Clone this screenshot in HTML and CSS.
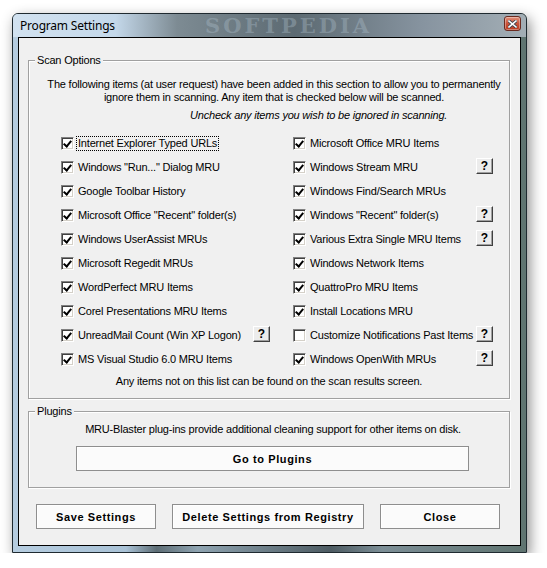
FILE: index.html
```html
<!DOCTYPE html>
<html lang="en">
<head>
  <meta charset="UTF-8" />
  <title>Program Settings</title>
  <link rel="stylesheet" href="styles.css">
</head>
<body>

  <!-- Dialog window -->
  <div class="window">
    <div class="titlebar">
      <span class="title">Program Settings</span>
      <span class="watermark">SOFTPEDIA</span>
      <button class="close-btn" title="Close">
        <svg width="9" height="8" viewBox="0 0 9 8">
          <path d="M1 1 L8 7 M8 1 L1 7" stroke="#3a4250" stroke-width="3.2" stroke-linecap="square"/>
          <path d="M1 1 L8 7 M8 1 L1 7" stroke="#fff" stroke-width="1.6" stroke-linecap="square"/>
        </svg>
      </button>
    </div>

    <div class="client">

      <!-- Scan options -->
      <fieldset class="group scan">
        <legend>Scan Options</legend>
        <p class="intro">The following items (at user request) have been added in this section to allow you to permanently<br>ignore them in scanning. Any item that is checked below will be scanned.</p>
        <p class="hint">Uncheck any items you wish to be ignored in scanning.</p>

        <div class="options">
          <label class="opt"><span class="cb checked"></span><span class="focus">Internet Explorer Typed URLs</span></label>
          <label class="opt"><span class="cb checked"></span><span>Microsoft Office MRU Items</span></label>

          <label class="opt"><span class="cb checked"></span><span>Windows "Run..." Dialog MRU</span></label>
          <label class="opt"><span class="cb checked"></span><span>Windows Stream MRU</span><button class="help">?</button></label>

          <label class="opt"><span class="cb checked"></span><span>Google Toolbar History</span></label>
          <label class="opt"><span class="cb checked"></span><span>Windows Find/Search MRUs</span></label>

          <label class="opt"><span class="cb checked"></span><span>Microsoft Office "Recent" folder(s)</span></label>
          <label class="opt"><span class="cb checked"></span><span>Windows "Recent" folder(s)</span><button class="help">?</button></label>

          <label class="opt"><span class="cb checked"></span><span>Windows UserAssist MRUs</span></label>
          <label class="opt"><span class="cb checked"></span><span>Various Extra Single MRU Items</span><button class="help">?</button></label>

          <label class="opt"><span class="cb checked"></span><span>Microsoft Regedit MRUs</span></label>
          <label class="opt"><span class="cb checked"></span><span>Windows Network Items</span></label>

          <label class="opt"><span class="cb checked"></span><span>WordPerfect MRU Items</span></label>
          <label class="opt"><span class="cb checked"></span><span>QuattroPro MRU Items</span></label>

          <label class="opt"><span class="cb checked"></span><span>Corel Presentations MRU Items</span></label>
          <label class="opt"><span class="cb checked"></span><span>Install Locations MRU</span></label>

          <label class="opt"><span class="cb checked"></span><span>UnreadMail Count (Win XP Logon)</span><button class="help">?</button></label>
          <label class="opt"><span class="cb"></span><span>Customize Notifications Past Items</span><button class="help">?</button></label>

          <label class="opt"><span class="cb checked"></span><span>MS Visual Studio 6.0 MRU Items</span></label>
          <label class="opt"><span class="cb checked"></span><span>Windows OpenWith MRUs</span><button class="help">?</button></label>
        </div>

        <p class="note">Any items not on this list can be found on the scan results screen.</p>
      </fieldset>

      <!-- Plugins -->
      <fieldset class="group plugins">
        <legend>Plugins</legend>
        <p class="plug-text">MRU-Blaster plug-ins provide additional cleaning support for other items on disk.</p>
        <button class="btn plug-btn">Go to Plugins</button>
      </fieldset>

      <div class="actions">
        <button class="btn save-btn">Save Settings</button>
        <button class="btn delete-btn">Delete Settings from Registry</button>
        <button class="btn close-action">Close</button>
      </div>

    </div>
  </div>

</body>
</html>
```

FILE: styles.css
```css
* { box-sizing: border-box; }

body {
  margin: 0;
  background: #fff;
  font: 11px/13px "Liberation Sans", Arial, sans-serif;
  letter-spacing: -0.2px;
  color: #000;
}

p { margin: 0; }

/* window frame */
.window {
  margin: 13px 0 0 12px;
  width: 515px;
  height: 540px;
  border: 1px solid #1f2a30;
  border-radius: 6px 6px 0 0;
  padding: 0 5px 6px 5px;
  display: flex;
  flex-direction: column;
  background: linear-gradient(90deg, #b6cde0 0%, #a9c2d6 22%, #5d6d75 28%, #8ea3b0 36%, #4d5b62 62%, #7c8e96 72%, #5f7470 100%);
  box-shadow: 3px 5px 14px rgba(0,0,0,0.45);
}

.titlebar {
  height: 23px;
  display: flex;
  align-items: center;
  position: relative;
  background: linear-gradient(90deg, #d2e2f0 0%, #c4d8ea 20%, #7d8b93 32%, #5c6a72 55%, #8794a0 80%, #a3aeb5 100%);
  margin: 0 -5px;
  padding: 0 5px;
  border-radius: 5px 5px 0 0;
}

.title {
  margin-left: 2px;
  font: 12px "Noto Sans", "DejaVu Sans", sans-serif;
  letter-spacing: -0.2px;
  color: #000;
  position: relative;
  z-index: 1;
}

.watermark {
  position: absolute;
  left: 192px;
  top: 1px;
  font: bold 21px/21px "DejaVu Serif", serif;
  letter-spacing: 3px;
  color: rgba(170,188,200,0.4);
}

.close-btn {
  margin-left: auto;
  margin-top: -4px;
  width: 17px;
  height: 15px;
  padding: 0;
  border: 1px solid #6b2b20;
  border-radius: 3px;
  background: linear-gradient(#e2927c, #c9523a 50%, #b8391f);
  box-shadow: inset 0 0 0 1px rgba(255,255,255,0.35);
  display: flex;
  align-items: center;
  justify-content: center;
  position: relative;
  z-index: 1;
}

/* client area */
.client {
  flex: 1;
  background: #f0f0f0;
  border: 1px solid #000;
  padding: 0 10px 0 9px;
  display: flex;
  flex-direction: column;
}

.group {
  margin: 0;
  padding: 0;
  border: 1px solid #a0a0a0;
  box-shadow: inset 1px 1px #fff, 1px 1px #fff;
  min-width: 0;
}

.group legend {
  margin-left: 6px;
  padding: 0 2px;
  background: #f0f0f0;
  line-height: 13px;
}

.scan { margin-top: 16px; padding-bottom: 10px; }

.intro { margin-top: 11px; text-align: center; padding-left: 10px; white-space: nowrap; }

.hint { margin-top: 5px; margin-left: 161px; font-style: italic; }

.options {
  margin-top: 9px;
  padding-left: 32px;
  display: grid;
  grid-template-columns: 209px 200px;
  column-gap: 23px;
}

.opt {
  height: 24px;
  display: flex;
  align-items: center;
  white-space: nowrap;
}

.cb {
  width: 13px;
  height: 13px;
  flex: none;
  margin-right: 4px;
  background: #fff;
  border: 1px solid;
  border-color: #808080 #fff #fff #808080;
  box-shadow: inset 1px 1px #404040, inset -1px -1px #d4d0c8;
  position: relative;
}

.cb.checked::after {
  content: "";
  position: absolute;
  left: 3px;
  top: 1px;
  width: 3px;
  height: 6px;
  border: solid #000;
  border-width: 0 2px 2px 0;
  transform: rotate(40deg);
}

.focus {
  outline: 1px dotted #000;
  outline-offset: 0;
  padding: 0 1px;
  margin-left: -1px;
}

.help {
  margin-left: auto;
  flex: none;
  width: 17px;
  height: 16px;
  padding: 0;
  background: #ececec;
  border: 1px solid;
  border-color: #fff #404040 #404040 #fff;
  box-shadow: inset -1px -1px #a0a0a0;
  font: bold 12px/12px "Liberation Sans", Arial, sans-serif;
  margin-top: -2px;
}

.note { margin-top: 4px; text-align: center; }

.plugins { margin-top: 6px; padding-bottom: 16px; }

.plug-text { margin-top: 5px; text-align: center; padding-left: 8px; }

.btn {
  height: 25px;
  padding: 0;
  background: #fbfbfb;
  border: 1px solid #8e8e8e;
  box-shadow: inset 1px 1px #fff;
  font: bold 11px "Liberation Sans", Arial, sans-serif;
  letter-spacing: 0.6px;
  color: #000;
}

.plug-btn {
  margin: 10px 0 0 47px;
  width: 393px;
  display: block;
}

.actions {
  margin-top: 16px;
  padding-left: 8px;
  display: flex;
  gap: 16px;
}

.save-btn, .close-action { width: 120px; }
.delete-btn { width: 192px; }
```
